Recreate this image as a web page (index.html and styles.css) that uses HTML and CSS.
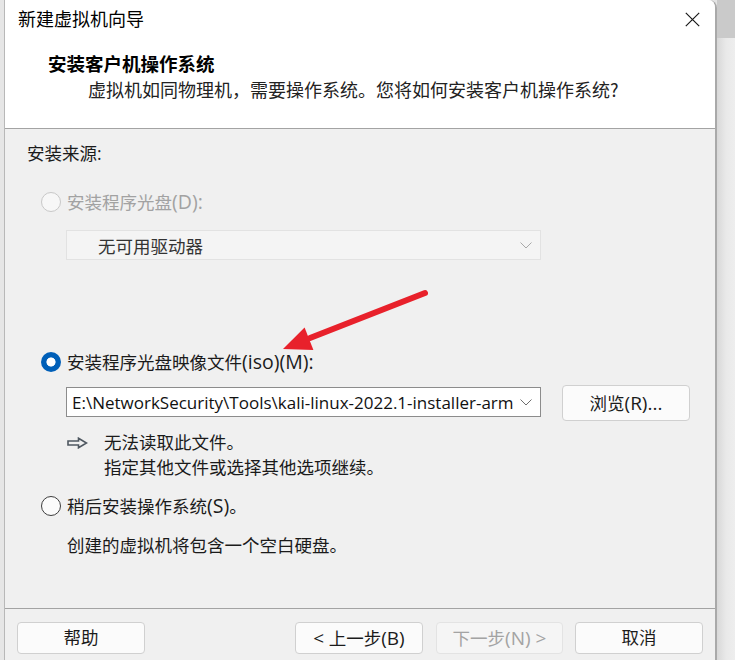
FILE: index.html
```html
<!DOCTYPE html>
<html lang="zh-CN">
<head>
<meta charset="utf-8">
<title>新建虚拟机向导</title>
<link rel="stylesheet" href="styles.css">
</head>
<body>
<div class="desktop">
  <div class="edge-left"></div>
  <div class="window">
    <div class="titlebar">
      <span class="title">新建虚拟机向导</span>
      <svg class="close" width="15" height="15" viewBox="0 0 15 15"><path d="M0.8 0.8L14.2 14.2M14.2 0.8L0.8 14.2"/></svg>
    </div>
    <div class="header">
      <div class="h-title">安装客户机操作系统</div>
      <div class="h-sub">虚拟机如同物理机，需要操作系统。您将如何安装客户机操作系统?</div>
    </div>
    <div class="content">
      <div class="section-label">安装来源:</div>
      <div class="radio-row is-disabled"><span class="radio"></span><span class="label">安装程序光盘<span class="lat">(D):</span></span></div>
      <div class="combo combo-disabled">
        <span class="combo-text">无可用驱动器</span>
        <svg class="chevron" width="12" height="7" viewBox="0 0 12 7"><polyline points="0.5,0.5 6,6 11.5,0.5"/></svg>
      </div>
      <div class="radio-row radio-row-iso"><span class="radio radio-checked"></span><span class="label">安装程序光盘映像文件<span class="lat">(iso)(M):</span></span></div>
      <div class="file-row">
        <div class="combo combo-file">
          <span class="path">E:\NetworkSecurity\Tools\kali-linux-2022.1-installer-arm</span>
          <svg class="chevron" width="12" height="7" viewBox="0 0 12 7"><polyline points="0.5,0.5 6,6 11.5,0.5"/></svg>
        </div>
        <button class="btn browse">浏览<span class="lat">(R)...</span></button>
      </div>
      <div class="hint">
        <svg class="hint-arrow" width="21" height="12" viewBox="0 0 21 12"><path d="M1 4 H11.5 V1.2 L19.5 6 L11.5 10.8 V8 H1 Z"/></svg>
        <div class="hint-text">
          <div>无法读取此文件。</div>
          <div>指定其他文件或选择其他选项继续。</div>
        </div>
      </div>
      <div class="radio-row radio-row-later"><span class="radio"></span><span class="label">稍后安装操作系统<span class="lat">(S)</span>。</span></div>
      <div class="desc">创建的虚拟机将包含一个空白硬盘。</div>
    </div>
    <div class="footer">
      <button class="btn fbtn">帮助</button>
      <button class="btn fbtn back"><span class="lat">&lt;</span> 上一步<span class="lat">(B)</span></button>
      <button class="btn fbtn next" disabled>下一步<span class="lat">(N) &gt;</span></button>
      <button class="btn fbtn cancel">取消</button>
    </div>
    <svg class="annotation" width="170" height="75" viewBox="0 0 170 75">
      <line x1="155" y1="8" x2="40" y2="53" />
      <polygon points="13,64 43.4,64.9 34.6,42.5"/>
    </svg>
  </div>
  <div class="edge-right"></div>
</div>
</body>
</html>
```

FILE: styles.css
```css
* { box-sizing: border-box; }
html, body { margin: 0; padding: 0; }
body {
  width: 735px;
  height: 660px;
  overflow: hidden;
  background: #e4e4e4;
  font-family: "Open Sans", "Noto Sans CJK SC", sans-serif;
  color: #1b1b1b;
}
.desktop { display: flex; height: 660px; }
.edge-left { width: 4px; background: #e6e6e6; }
.edge-right {
  flex: 1;
  background:
    linear-gradient(#cacaca, #cacaca) top left / 100% 38px no-repeat,
    linear-gradient(to right, #d8d8d8, #e9e9e9 50%, #eeeeee);
}
.window {
  position: relative;
  width: 713px;
  height: 660px;
  display: flex;
  flex-direction: column;
  background: #f0f0f0;
  border-left: 1px solid #b8b8b8;
  border-right: 2px solid #a9a9a9;
  border-top-right-radius: 8px;
  overflow: hidden;
}
.titlebar {
  height: 36px;
  background: #fff;
  display: flex;
  align-items: center;
  padding-left: 13px;
}
.title {
  font-family: "Noto Sans CJK SC", sans-serif;
  font-size: 18px;
  line-height: 36px;
  color: #000;
}
.close {
  margin-left: auto;
  margin-right: 15px;
  margin-top: 2px;
}
.close path { stroke: #1a1a1a; stroke-width: 1.2; fill: none; }
.header {
  height: 93px;
  background: #fff;
  border-bottom: 1px solid #a3a3a3;
  padding: 14px 0 0 43px;
  font-family: "Noto Sans CJK SC", sans-serif;
}
.h-title {
  font-size: 18.5px;
  font-weight: 700;
  line-height: 26px;
  color: #000;
}
.h-sub {
  font-size: 18px;
  line-height: 26px;
  margin-left: 40px;
  color: #222;
}
.content {
  flex: 1;
  display: flex;
  flex-direction: column;
  align-items: flex-start;
  padding: 12px 0 0 22px;
  font-size: 17.5px;
}
.lat {
  font-family: "Open Sans", sans-serif;
  font-size: 19.5px;
}
.section-label { line-height: 24px; }
.radio-row {
  display: flex;
  align-items: center;
  height: 24px;
  margin-top: 25px;
  padding-left: 14px;
  gap: 6px;
  line-height: 24px;
}
.radio {
  width: 20px;
  height: 20px;
  border-radius: 50%;
  border: 1px solid #3d3d3d;
  background: #fbfbfb;
  flex: none;
}
.is-disabled .label { color: #a2a2a2; }
.is-disabled .radio { border-color: #c8c8c8; background: #f7f7f7; }
.radio-checked {
  border: none;
  background: radial-gradient(circle at center, #ffffff 0 4.2px, #005fb8 4.9px);
}
.radio-row-iso { margin-top: 90px; }
.combo {
  margin-left: 39px;
  width: 475px;
  display: flex;
  align-items: center;
  border: 1px solid;
  overflow: hidden;
  white-space: nowrap;
}
.combo-disabled {
  margin-top: 16px;
  height: 30px;
  background: #f4f4f4;
  border-color: #e2e2e2;
  padding-left: 31px;
  color: #333;
}
.combo-disabled .chevron polyline { stroke: #a8a8a8; }
.chevron { margin-left: auto; margin-right: 8px; flex: none; }
.chevron polyline { fill: none; stroke: #6e6e6e; stroke-width: 1; }
.file-row {
  display: flex;
  align-items: flex-start;
  margin-top: 11px;
  height: 36px;
}
.combo-file {
  margin-top: 2px;
  height: 30px;
  background: #fff;
  border-color: #8c8c8c;
  padding-left: 5px;
}
.path {
  font-size: 17px;
  color: #111;
  overflow: hidden;
  flex: 1;
  min-width: 0;
}
.btn {
  font-family: "Open Sans", "Noto Sans CJK SC", sans-serif;
  font-size: 17.5px;
  color: #1b1b1b;
  background: #fbfbfb;
  border: 1px solid #d0d0d0;
  border-radius: 4px;
  padding: 0;
  line-height: 1;
}
.btn .lat { font-size: 19px; }
.browse {
  margin-left: 21px;
  width: 128px;
  height: 36px;
}
.hint {
  display: flex;
  align-items: flex-start;
  margin-top: 9px;
  margin-left: 40px;
}
.hint-arrow { margin-top: 7px; flex: none; }
.hint-arrow path { fill: none; stroke: #4f5861; stroke-width: 1.6; stroke-linejoin: miter; }
.hint-text {
  margin-left: 16px;
  line-height: 25px;
}
.radio-row-later { margin-top: 14px; }
.desc {
  margin-top: 15px;
  margin-left: 40px;
  line-height: 24px;
}
.footer {
  height: 52px;
  flex: none;
  border-top: 1px solid #a3a3a3;
  padding: 13px 12px 0 12px;
  display: flex;
  align-items: flex-start;
}
.fbtn { width: 128px; height: 32px; }
.back { margin-left: auto; }
.next { margin-left: 13px; width: 127px; color: #a3a3a3; background: #f5f5f5; border-color: #e3e3e3; }
.cancel { margin-left: 12px; }
.annotation {
  position: absolute;
  left: 265px;
  top: 285px;
  pointer-events: none;
}
.annotation line { stroke: #e8212b; stroke-width: 6; stroke-linecap: round; }
.annotation polygon { fill: #e8212b; }
```
